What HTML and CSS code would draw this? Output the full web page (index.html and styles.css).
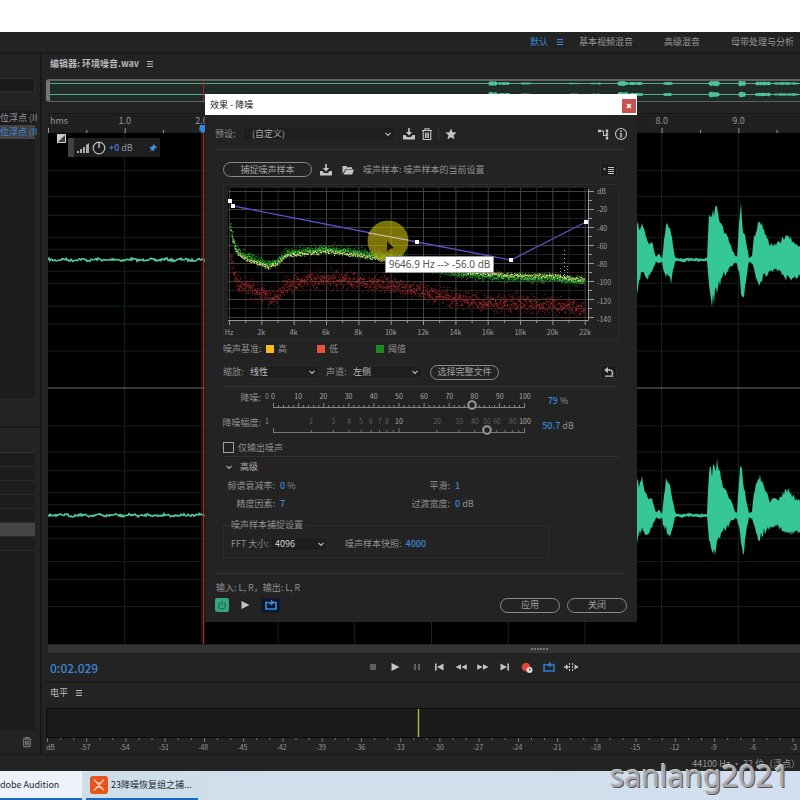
FILE: index.html
```html
<!DOCTYPE html>
<html lang="zh-CN">
<head>
<meta charset="utf-8">
<title>Adobe Audition</title>
<link rel="stylesheet" href="styles.css">
</head>
<body>
<svg class="defs" aria-hidden="true">
  <symbol id="i-menu" viewBox="0 0 8 8"><path d="M1 1.500h6M1 4h6M1 6.500h6" stroke="currentColor" fill="none"/></symbol>
  <symbol id="i-chev" viewBox="0 0 8 8"><path d="M1.500 2.800L4 5.300l2.500-2.500" stroke="currentColor" stroke-width="1.200" fill="none"/></symbol>
  <symbol id="i-save" viewBox="0 0 14 14"><path d="M6.200 1h1.600v4h2.400L7 8.600 3.800 5h2.400z M1 8h2.500l1.500 2h4l1.500-2H13v4.500H1z" fill="currentColor"/></symbol>
  <symbol id="i-trash" viewBox="0 0 14 14"><path d="M2 3.500h10M5 3.200V1.700h4v1.500M3.200 4v8.500h7.600V4M5.500 5.500v5.500M7 5.500v5.500M8.500 5.500v5.500" stroke="currentColor" stroke-width="1.100" fill="none"/></symbol>
  <symbol id="i-loop" viewBox="0 0 14 14"><path d="M4 4.500H2V11h10V4.500h-2" stroke="currentColor" stroke-width="1.600" fill="none"/><path d="M4.500 6.500V4H7V1.500L10.500 4.700 7 7.800V5.500z" fill="currentColor"/></symbol>
  <symbol id="i-play" viewBox="0 0 14 14"><path d="M3.500 3l8 4-8 4z" fill="currentColor"/></symbol>
</svg>

<div class="blank"></div>
<div class="app">
  <nav class="workspaces">
    <a href="#" class="active">默认<svg class="i8"><use href="#i-menu"/></svg></a>
    <a href="#">基本视频混音</a>
    <a href="#">高级混音</a>
    <a href="#">母带处理与分析</a>
  </nav>
  <div class="main">
    <aside class="side">
      <section class="files">
        <input class="search" type="text" aria-label="搜索">
        <ul class="file-list">
          <li>位浮点 (II</li>
          <li class="selected">位浮点 (II</li>
        </ul>
      </section>
      <section class="history">
        <ul class="rows"><li></li><li></li><li></li><li></li><li></li><li class="selected"></li><li></li></ul>
        <div class="side-tools"><button class="icon" aria-label="删除"><svg class="i12"><use href="#i-trash"/></svg></button></div>
      </section>
    </aside>

    <main class="editor">
      <header class="panel-title"><b>编辑器: 环境噪音.wav</b><svg class="i8"><use href="#i-menu"/></svg></header>
      <div class="overview"><svg viewBox="50 80 750 20" preserveAspectRatio="none" id="overview"></svg></div>
      <div class="time-ruler">
        <div class="time-labels"><span class="unit">hms</span><span>1.0</span><span>2.0</span><span>3.0</span><span>4.0</span><span>5.0</span><span>6.0</span><span>7.0</span><span>8.0</span><span>9.0</span></div>
        <svg class="ticks" viewBox="48 0 752 8" preserveAspectRatio="none" id="time-ticks"></svg>
      </div>
      <div class="wave">
        <svg class="wave-plot" viewBox="48 133 752 512" preserveAspectRatio="none" id="wave"></svg>
        <svg class="corner" viewBox="0 0 9 9"><path d="M0 0h9v9H0z" fill="#ccc"/><path d="M8 1v7H1z" fill="#444"/></svg>
        <div class="hud">
          <svg class="i14" viewBox="0 0 14 12"><path d="M1 11h2v-2H1zM4 11h2V7H4zM7 11h2V5H7zM10 11h3V1l-3 2z" fill="#aaa"/></svg>
          <svg class="i14" viewBox="0 0 14 14"><circle cx="7" cy="7" r="5.800" fill="none" stroke="#bbb" stroke-width="1.200"/><path d="M7 1v6" stroke="#ccc" stroke-width="1.300"/></svg>
          <span><em>+0</em> dB</span>
          <svg class="pin" viewBox="0 0 10 10"><path d="M5.500 1L9 4.500 8 5 6.800 5.500 5.500 8.500 3.800 6.800 1 9.200 3.200 6.200 1.500 4.500 4.500 3.200z" fill="#3f8fe0"/></svg>
        </div>
      </div>
      <div class="hscroll"><span></span></div>
      <div class="transport">
        <output class="clock">0:02.029</output>
        <div class="controls">
          <button class="icon dim" aria-label="停止"><svg class="i14" viewBox="0 0 14 14"><path d="M4 4h6v6H4z" fill="currentColor"/></svg></button>
          <button class="icon" aria-label="播放"><svg class="i14"><use href="#i-play"/></svg></button>
          <button class="icon dim" aria-label="暂停"><svg class="i14" viewBox="0 0 14 14"><path d="M4 4h2v6H4zM8 4h2v6H8z" fill="currentColor"/></svg></button>
          <button class="icon" aria-label="上一个"><svg class="i14" viewBox="0 0 14 14"><path d="M3 3.500h1.600v7H3zM11.500 3.500v7L5 7z" fill="currentColor"/></svg></button>
          <button class="icon" aria-label="快退"><svg class="i14" viewBox="0 0 14 14"><path d="M7 4.300v5.400L1.500 7zM12.800 4.300v5.400L7.300 7z" fill="currentColor"/></svg></button>
          <button class="icon" aria-label="快进"><svg class="i14" viewBox="0 0 14 14"><path d="M1.200 4.300v5.400L6.700 7zM7 4.300v5.400L12.500 7z" fill="currentColor"/></svg></button>
          <button class="icon" aria-label="下一个"><svg class="i14" viewBox="0 0 14 14"><path d="M9.400 3.500H11v7H9.400zM2.500 3.500v7L9 7z" fill="currentColor"/></svg></button>
          <button class="icon" aria-label="录制"><svg class="i14" viewBox="0 0 14 14"><circle cx="6" cy="7" r="4.300" fill="#e8423e"/><circle cx="9.500" cy="10" r="3" fill="#ddd"/><path d="M9.500 8.300V10H11" stroke="#333" stroke-width=".8" fill="none"/></svg></button>
          <button class="icon blue" aria-label="循环播放"><svg class="i14"><use href="#i-loop"/></svg></button>
          <button class="icon" aria-label="跳过所选项目"><svg class="i14" viewBox="0 0 14 14"><path d="M0 7h3M11 7h3" stroke="currentColor" stroke-width="1.300"/><path d="M5.500 3v8M8.500 3v8" stroke="currentColor" stroke-dasharray="2 1"/><path d="M2 4.300L5 7 2 9.700zM10.500 4.300L14 7l-3.500 2.700z" fill="currentColor"/></svg></button>
        </div>
      </div>
      <section class="levels">
        <header class="panel-title">电平<svg class="i8"><use href="#i-menu"/></svg></header>
        <div class="meter"><svg viewBox="46 0 754 29" preserveAspectRatio="none"><path d="M418 0v29" stroke="#b0b040" stroke-width="1.500"/></svg></div>
        <svg class="ticks" viewBox="46 0 754 4" preserveAspectRatio="none" id="level-ticks"></svg>
        <div class="level-labels"><span>dB</span><span>-57</span><span>-54</span><span>-51</span><span>-48</span><span>-45</span><span>-42</span><span>-39</span><span>-36</span><span>-33</span><span>-30</span><span>-27</span><span>-24</span><span>-21</span><span>-18</span><span>-15</span><span>-12</span><span>-9</span><span>-6</span><span>-3</span></div>
      </section>
    </main>
  </div>
  <footer class="status">44100 Hz • 32 位（浮点）</footer>
</div>

<div class="taskbar">
  <button class="task first">dobe Audition</button>
  <button class="task second"><svg class="i18" viewBox="0 0 18 18"><rect width="18" height="18" rx="3" fill="#e8531c"/><path d="M4 3.500q5 7 10 0M4 14.500q5-7 10 0M4.500 4l9 10M13.500 4l-9 10" stroke="#ffd9bd" stroke-width="1.200" fill="none"/></svg>23降噪恢复组之捕...</button>
</div>
<div class="watermark">sanlang2021</div>

<div class="dialog" role="dialog" aria-labelledby="dlg-title">
  <header class="dlg-head"><span id="dlg-title">效果 - 降噪</span><button aria-label="关闭窗口" class="x"><svg viewBox="0 0 8 8"><path d="M2 2l4 4M6 2L2 6" stroke="#fff" stroke-width="1.500"/></svg></button></header>
  <div class="preset">
    <label for="preset">预设:</label>
    <span class="select wide"><select id="preset"><option>(自定义)</option></select><svg class="i8"><use href="#i-chev"/></svg></span>
    <button class="icon" aria-label="保存预设"><svg class="i14"><use href="#i-save"/></svg></button>
    <button class="icon" aria-label="删除预设"><svg class="i14"><use href="#i-trash"/></svg></button>
    <i class="sep"></i>
    <button class="icon" aria-label="收藏"><svg class="i12" viewBox="0 0 12 12"><path d="M6 .5l1.600 3.700 4 .4-3 2.700.9 4L6 9.200l-3.500 2.100.9-4-3-2.700 4-.4z" fill="currentColor"/></svg></button>
    <span class="grow"></span>
    <button class="icon" aria-label="声道路由"><svg class="i12" viewBox="0 0 12 12"><path d="M1 3h5.500v4.500H10M10 2.500v8" stroke="currentColor" stroke-width="1.100" fill="none"/><path d="M1 1.800h3v2.400H1zM8.800 1.500h2.400v2.400H8.800zM8.800 5.300h2.400v2.400H8.800zM8.800 9h2.400v2.400H8.800z" fill="currentColor"/></svg></button>
    <button class="icon" aria-label="信息"><svg class="i14" viewBox="0 0 14 14"><circle cx="7" cy="7" r="5.500" stroke="currentColor" stroke-width="1.100" fill="none"/><path d="M6.200 3.400h1.600V5H6.200zM5.700 6h2.100v3.700h.6v.8H5.600v-.8h.7V6.800h-.6z" fill="currentColor"/></svg></button>
  </div>
  <div class="content">
    <div class="capture">
      <button class="pill">捕捉噪声样本</button>
      <button class="icon" aria-label="保存噪声样本"><svg class="i14"><use href="#i-save"/></svg></button>
      <button class="icon" aria-label="打开噪声样本"><svg class="i14" viewBox="0 0 14 14"><path d="M1.500 11V3h3.800l1 1.300H11V6H4.500zM5 6.600h8L11.200 11.500H2.500z" fill="currentColor"/></svg></button>
      <span>噪声样本: 噪声样本的当前设置</span>
      <span class="grow"></span>
      <button class="square" aria-label="菜单"><svg class="i12" viewBox="0 0 12 10"><path d="M0 3.500h3L1.500 5.500z" fill="currentColor"/><path d="M5 2.500h6M5 4.500h6M5 6.500h6M5 8.500h6" stroke="currentColor"/></svg></button>
    </div>

    <div class="chart">
      <div class="plot">
        <svg viewBox="228 188 367 137" preserveAspectRatio="none" id="spectrum"></svg>
        <div class="tip">9646.9 Hz --&gt; -56.0 dB</div>
      </div>
      <div class="db"><span>dB</span><span>-20</span><span>-40</span><span>-60</span><span>-80</span><span>-100</span><span>-120</span><span>-140</span></div>
      <div class="hz"><span>Hz</span><span>2k</span><span>4k</span><span>6k</span><span>8k</span><span>10k</span><span>12k</span><span>14k</span><span>16k</span><span>18k</span><span>20k</span><span>22k</span></div>
    </div>

    <div class="key"><span class="key-name">噪声基准:</span><span class="high">高</span><span class="low">低</span><span class="thr">阈值</span></div>

    <div class="zoom">
      <label for="scale">缩放:</label>
      <span class="select mid"><select id="scale"><option>线性</option></select><svg class="i8"><use href="#i-chev"/></svg></span>
      <label for="chan">声道:</label>
      <span class="select mid"><select id="chan"><option>左侧</option></select><svg class="i8"><use href="#i-chev"/></svg></span>
      <button class="pill">选择完整文件</button>
      <span class="grow"></span>
      <button class="square" aria-label="重置"><svg class="i12" viewBox="0 0 12 12"><path d="M3 4h3.500a3 3 0 0 1 2 5.300" stroke="currentColor" stroke-width="1.500" fill="none"/><path d="M5 1v6L1 4zM2 9.500h8.500v1.300H2z" fill="currentColor"/></svg></button>
    </div>

    <div class="sliders">
      <div class="slider">
        <label for="nr">降噪:</label><span class="min">0</span>
        <div class="scale">
          <div class="nums"><span>0</span><span>10</span><span>20</span><span>30</span><span>40</span><span>50</span><span>60</span><span>70</span><span>80</span><span>90</span><span>100</span></div>
          <div class="track"><svg viewBox="0 0 252 10" preserveAspectRatio="none" id="lin-ticks"></svg><input type="range" id="nr" min="0" max="100" value="79"></div>
        </div>
        <output><em>79</em> %</output>
      </div>
      <div class="slider">
        <label for="nrdb">降噪幅度:</label><span class="min">1</span>
        <div class="scale">
          <svg class="log-nums" id="log-nums"></svg>
          <div class="track"><svg viewBox="0 0 252 10" preserveAspectRatio="none" id="log-ticks"></svg><input type="range" id="nrdb" min="0" max="1000" value="850"></div>
        </div>
        <output><em>50.7</em> dB</output>
      </div>
      <label class="check"><input type="checkbox">仅输出噪声</label>
    </div>

    <div class="advanced"><svg class="i8"><use href="#i-chev"/></svg>高级</div>
    <div class="pairs">
      <span>频谱衰减率:</span><span><em>0</em> %</span><span>平滑:</span><span><em>1</em></span>
      <span>精度因素:</span><span><em>7</em></span><span>过渡宽度:</span><span><em>0</em> dB</span>
    </div>
    <fieldset>
      <legend>噪声样本捕捉设置</legend>
      <div class="fft">
        <label for="fft">FFT 大小:</label>
        <span class="select small"><select id="fft"><option>4096</option></select><svg class="i8"><use href="#i-chev"/></svg></span>
        <span>噪声样本快照:</span><em>4000</em>
      </div>
    </fieldset>
  </div>
  <footer class="dlg-foot">
    <div class="io">输入: L, R，输出: L, R</div>
    <div class="actions">
      <button class="power" aria-label="电源"><svg class="i12" viewBox="0 0 12 12"><path d="M6 2V6.500M3.800 3.800a3.500 3.500 0 1 0 4.400 0" stroke="#1d6b50" stroke-width="1.100" fill="none"/></svg></button>
      <button class="icon" aria-label="预览播放"><svg class="i14"><use href="#i-play"/></svg></button>
      <button class="loop" aria-label="循环"><svg class="i14"><use href="#i-loop"/></svg></button>
      <span class="grow"></span>
      <button class="pill end">应用</button>
      <button class="pill end">关闭</button>
    </div>
  </footer>
</div>
<script src="script.js"></script>
</body>
</html>
```
FILE: styles.css
```css
* { box-sizing: border-box; }
html { height: 100%; }
body {
  margin: 0;
  min-height: 100%;
  display: flex;
  flex-direction: column;
  position: relative;
  overflow: hidden;
  background: #fff;
  color: #979797;
  font: 9px/12px "Noto Sans CJK SC", "Noto Sans", sans-serif;
}
button, input, select { font: inherit; color: inherit; margin: 0; padding: 0; }
button { border: 0; background: none; display: flex; align-items: center; justify-content: center; white-space: nowrap; }
svg { display: block; flex: none; }
em { font-style: normal; font-weight: 500; color: #3b86dc; }
a { color: inherit; text-decoration: none; }
ul { list-style: none; margin: 0; padding: 0; }
.defs { width: 0; height: 0; position: absolute; }
.i8 { width: 8px; height: 8px; }
.i12 { width: 12px; height: 12px; }
.i14 { width: 14px; height: 14px; }
.i18 { width: 18px; height: 18px; }
.grow { flex: 1; }
.icon { color: #c4c4c4; }
.icon.dim { color: #606060; }
.icon.blue { color: #2f7ad0; }

.blank { height: 32px; }
.app { flex: 1; display: flex; flex-direction: column; background: #232323; }
.workspaces {
  height: 20px;
  display: flex;
  align-items: center;
  justify-content: flex-end;
  gap: 31px;
  padding-right: 6px;
  white-space: nowrap;
}
.workspaces .active { display: flex; align-items: center; gap: 8px; color: #3b86dc; margin-right: -16px; }
.main { flex: 1; display: flex; border-top: 2px solid #1a1a1a; border-bottom: 1px solid #181818; }

.side { width: 42px; display: flex; flex-direction: column; border-right: 2px solid #181818; }
.files { height: 374px; padding-top: 24px; border-bottom: 2px solid #181818; }
.search { width: 35px; height: 14px; display: block; border: 1px solid #2d2d2d; border-left: 0; background: #191919; }
.file-list { width: 35px; height: 287px; margin-top: 19px; background: #1c1c1c; white-space: nowrap; }
.file-list li { height: 14px; line-height: 14px; }
.file-list .selected { background: #424242; color: #3b86dc; }
.history { flex: 1; display: flex; flex-direction: column; padding-top: 24px; }
.rows { flex: 1; width: 35px; background: #1c1c1c; border-top: 1px solid #303030; }
.rows li { height: 14px; border-bottom: 1px solid #292929; }
.rows .selected { background: #454545; }
.side-tools { height: 24px; display: flex; align-items: center; justify-content: center; padding-left: 14px; }
.side-tools .icon { color: #8a8a8a; }

.editor { flex: 1; min-width: 0; display: flex; flex-direction: column; padding-left: 4px; }
.panel-title { height: 20px; display: flex; align-items: center; gap: 7px; padding-left: 4px; color: #b8b8b8; }
.overview { height: 23px; margin-top: 5px; border: 2px solid #606060; border-right: 0; border-left: 4px solid #777; border-radius: 3px 0 0 3px; border-bottom-width: 1px; background: #202a27; }
.overview svg { width: 100%; height: 20px; }
.time-ruler { height: 20px; margin: 11px 0 0 2px; border-top: 1px solid #181818; background: #202020; display: flex; flex-direction: column; justify-content: space-between; }
.time-labels { display: grid; grid-template-columns: 5fr repeat(9, 10fr) 3fr; text-align: center; line-height: 14px; margin-bottom: -3px; }
.time-labels .unit { text-align: left; padding-left: 2px; }
.time-labels span { min-width: 0; }
.ticks { width: 100%; height: 8px; }
.wave { position: relative; flex: 1; min-height: 300px; margin-left: 2px; background: #000; }
.wave-plot { position: absolute; inset: 0; width: 100%; height: 100%; }
.corner { position: absolute; left: 9px; top: 1px; width: 9px; height: 9px; }
.hud {
  position: absolute;
  left: 20px;
  top: 5px;
  width: 92px;
  height: 19px;
  display: flex;
  align-items: center;
  gap: 2px;
  padding-left: 2px;
  border-left: 6px solid #424242;
  background: #1e1e1e;
}
.hud span { flex: 1; padding-left: 1px; white-space: nowrap; }
.pin { width: 10px; height: 10px; margin-right: 2px; }
.hscroll { height: 8px; margin: 1px 0 0 2px; background: #343434; display: flex; align-items: center; justify-content: center; }
.hscroll span { width: 18px; height: 2px; margin-left: 232px; background: repeating-linear-gradient(90deg, #777 0 2px, #343434 2px 3px); }
.transport { height: 30px; display: grid; grid-template-columns: 314px 1fr; align-items: center; padding-left: 4px; border-bottom: 2px solid #181818; }
.clock { font-size: 12px; line-height: 16px; color: #3d84d6; font-weight: 500; padding-top: 2px; }
.controls { display: flex; gap: 8px; margin-left: 2px; }
.levels { height: 71px; display: flex; flex-direction: column; }
.levels .panel-title { height: 20px; flex: none; }
.meter { height: 30px; margin-top: 5px; flex: none; border: 1px solid #0c0c0c; border-right: 0; background: #1b1b1b; }
.meter svg { width: 100%; height: 28px; }
.levels .ticks { height: 4px; }
.level-labels { display: grid; grid-template-columns: 5fr repeat(18, 10fr) 7fr; text-align: center; font-size: 7px; line-height: 10px; }
.level-labels span { min-width: 0; }
.level-labels span:first-child { text-align: left; }
.level-labels span:last-child { text-align: right; padding-right: 3px; }
.status { height: 16px; line-height: 18px; text-align: right; white-space: nowrap; }

.taskbar { height: 29px; display: flex; gap: 4px; background: linear-gradient(90deg, #cddfe9, #d3dfef); color: #1c2733; }
.task { height: 29px; border-bottom: 2px solid #1a6bc0; }
.task.first { width: 82px; justify-content: flex-start; background: #eef2fa; }
.task.second { width: 112px; justify-content: flex-start; gap: 3px; padding-left: 4px; }
.watermark {
  position: absolute;
  right: 10px;
  bottom: 4px;
  color: #a8a8ac;
  font: 30px/40px "Noto Sans", "Open Sans", sans-serif;
  text-shadow: 1px 1px 0 #555, -1px -1px 0 #c8c8cc;
}

.dialog { position: absolute; left: 205px; top: 94px; width: 432px; background: #232323; color: #8f8f8f; }
.dlg-head { height: 21px; display: flex; align-items: center; justify-content: space-between; padding-left: 5px; background: #fff; color: #222; }
.x { width: 14px; height: 14px; margin-right: 1px; margin-top: 2px; background: #c75050; }
.x svg { width: 8px; height: 8px; }
.preset { height: 35px; display: flex; align-items: center; margin: 0 10px; padding-top: 4px; border-bottom: 1px solid #323232; }
.preset label { width: 28px; }
.preset .icon { margin-left: 4px; }
.preset .wide + .icon { margin-left: 7px; }
.sep { width: 1px; height: 12px; margin-left: 4px; background: #383838; }
.preset .sep + .icon { margin-left: 6px; }
.preset .icon:last-child { margin: 0 -1px 0 5px; }
.select { display: grid; align-items: center; }
.select > * { grid-area: 1 / 1; }
.select select { width: 100%; height: 14px; appearance: none; border: 1px solid #272727; background: #1e1e1e; color: #bcbcbc; border-radius: 1px; }
.select svg { justify-self: end; margin-right: 3px; pointer-events: none; color: #bbb; }
.wide { width: 152px; }
.wide select { padding-left: 8px; color: #a8a8a8; }
.mid { width: 70px; }
.small { width: 58px; }
.small select { padding-left: 4px; }

.content { padding: 0 18px; }
.capture { height: 34px; display: flex; align-items: center; gap: 8px; padding-top: 5px; white-space: nowrap; }
.pill { height: 15px; border: 1px solid #8a8a8a; border-radius: 8px; color: #a0a0a0; }
.capture .pill { width: 89px; margin-right: -1px; }
.square { width: 17px; height: 14px; border: 1px solid #2a2a2a; background: #1c1c1c; color: #c0c0c0; margin-right: 2px; }

.chart {
  height: 156px;
  display: grid;
  grid-template: 141px 15px / 371px 1fr;
  border: 1px solid #2b2b2b;
  background: #222;
  font-size: 7px;
  line-height: 12px;
  color: #a0a0a0;
}
.plot { position: relative; padding: 3px 0 0 4px; }
.plot svg { width: 100%; height: 137px; }
.db { display: flex; flex-direction: column; justify-content: space-between; height: 140px; margin-left: 2px; }
.hz { display: flex; justify-content: space-between; width: 366px; }
.hz span { width: 10px; display: flex; justify-content: center; }
.tip {
  position: absolute;
  left: 161px;
  top: 71px;
  width: 109px;
  height: 17px;
  border: 1px solid #999;
  background: #fff;
  color: #555;
  font: 10px/15px "Noto Sans", sans-serif;
  text-align: center;
  white-space: nowrap;
}
.key { height: 18px; display: flex; align-items: center; }
.key-name { width: 43px; }
.key .high, .key .low, .key .thr { display: flex; align-items: center; gap: 4px; }
.key .high::before, .key .low::before, .key .thr::before { content: ""; width: 8px; height: 8px; }
.key .high { width: 51px; }
.key .low { width: 59px; }
.high::before { background: #f5b921; }
.low::before { background: #e8533c; }
.thr::before { background: #1b8a1f; }
.zoom { height: 29px; display: flex; align-items: center; border-bottom: 1px solid #323232; white-space: nowrap; }
.zoom label { width: 26px; }
.zoom .select select { padding-left: 0; }
.zoom .mid { margin-right: 7px; }
.zoom .pill { width: 69px; margin-left: 1px; }

.sliders { padding-top: 2px; border-bottom: 1px solid #323232; }
.slider { height: 25px; display: flex; padding-top: 1px; white-space: nowrap; }
.slider label { width: 38px; display: flex; justify-content: flex-end; padding-top: 2px; }
.min { width: 8px; text-align: right; font-size: 7px; }
.scale { width: 260px; font-size: 7px; }
.nums { display: flex; justify-content: space-between; color: #a8a8a8; }
.nums span { width: 8px; display: flex; justify-content: center; }
.log-nums { width: 252px; height: 12px; margin-left: 4px; overflow: visible; fill: #606060; text-anchor: middle; }
.log-nums .major { fill: #b0b0b0; }
.track { display: grid; align-items: center; margin-top: -2px; }
.track > * { grid-area: 1 / 1; }
.track svg { width: 252px; height: 10px; margin-left: 4px; }
.track input { width: 260px; height: 10px; appearance: none; background: none; }
.track input::-webkit-slider-thumb { appearance: none; width: 8px; height: 8px; border: 1px solid #c0c0c0; border-radius: 50%; background: #232323; box-shadow: 0 0 0 1px #777; }
.slider output { width: 58px; padding-top: 5px; text-align: center; }
.check { height: 17px; display: flex; align-items: center; gap: 4px; }
.check input { appearance: none; width: 11px; height: 11px; border: 1px solid #a0a0a0; }
.advanced { height: 20px; display: flex; align-items: center; gap: 7px; padding-left: 2px; color: #b0b0b0; }
.pairs { display: grid; grid-template-columns: 52px 112px 53px 1fr; line-height: 18px; column-gap: 5px; }
.pairs > :nth-child(odd) { text-align: right; white-space: nowrap; }
fieldset { margin: 6px 70px 0 0; padding: 0; border: 1px solid #2e2e2e; min-width: 0; }
legend { margin-left: 7px; padding: 0 2px 0 0; }
.fft { height: 26px; display: flex; align-items: center; gap: 4px; padding-left: 7px; white-space: nowrap; }
.fft label { width: 35px; }
.fft .small { margin-right: 13px; }
.fft .small select { color: #d0d0d0; }
.dlg-foot { margin: 15px 10px 0; padding: 8px 0 9px; border-top: 1px solid #323232; }
.io { padding-left: 1px; }
.actions { height: 16px; margin-top: 3px; display: flex; align-items: center; }
.power { width: 14px; height: 14px; background: #35a37d; border-radius: 2px; }
.actions .icon { margin: 0 9px; }
.loop { width: 19px; height: 15px; background: #0e1726; border: 1px solid #151c28; color: #3b8ee8; }
.end { width: 60px; margin-left: 7px; }
```
FILE: script.js
```js
const NS = 'http://www.w3.org/2000/svg';
const byId = id => document.getElementById(id);

function add(svg, tag, attrs) {
  const el = document.createElementNS(NS, tag);
  for (const k in attrs) el.setAttribute(k, attrs[k]);
  svg.appendChild(el);
  return el;
}
const stroke = (svg, d, color, width = 1) =>
  add(svg, 'path', { d, stroke: color, 'stroke-width': width, fill: 'none' });

let seed = 7;
function rnd() {
  seed = (seed * 16807) % 2147483647;
  return seed / 2147483647;
}
function lerp(points, x) {
  let i = 1;
  while (i < points.length - 1 && points[i][0] < x) i++;
  const a = points[i - 1], b = points[i];
  const t = (x - a[0]) / (b[0] - a[0]);
  return a.map((v, k) => v + (b[k] - v) * t);
}

/* Waveform envelope: time position, upper edge, lower edge */
const envelope = [
  [637, 223, 291], [639, 228, 280], [642, 220, 275], [647, 242, 280], [652, 243, 273], [656, 257, 262],
  [659, 254, 264], [662, 259, 262], [663, 250, 270], [666, 224, 275], [671, 233, 282], [675, 257, 262],
  [677, 259, 261], [707, 259, 261], [709, 213, 286], [712, 217, 304], [717, 206, 293], [722, 227, 278],
  [730, 243, 268], [735, 256, 263], [737, 257, 264], [739, 225, 275], [741, 207, 290], [743, 227, 303],
  [747, 247, 273], [749, 258, 262], [752, 256, 264], [754, 237, 270], [759, 219, 285], [763, 227, 278],
  [770, 245, 273], [778, 243, 270], [787, 234, 280], [793, 241, 278], [800, 245, 277]
];

function drawWave() {
  const svg = byId('wave');
  let v = '';
  for (let i = 1; i < 10; i++) v += `M${(48 + 76.7 * i).toFixed(1)} 133V645`;
  stroke(svg, v, '#10291a');
  let h = '';
  for (const off of [0, 256])
    for (const y of [170, 196, 215, 237, 249, 271, 283, 306, 324, 351]) h += `M48 ${y + off + .5}H800`;
  stroke(svg, h, '#15211a');
  stroke(svg, 'M48 388.5H800', '#5c7a5e');
  for (const off of [0, 256]) {
    let line = `M48 ${260 + off}`;
    for (let x = 49; x < 800; x++) line += `L${x} ${(260 + off + Math.sin(x / 2.7) * .6 + (rnd() - .5) * 2.4).toFixed(1)}`;
    stroke(svg, line, '#55c8a0', 1.6);
    let top = '', bottom = '';
    for (let x = 637; x <= 800; x++) {
      const [, t, b] = lerp(envelope, x);
      const j = (b - t) * .16;
      top += `${top ? 'L' : 'M'}${x} ${(t + off + (rnd() - .4) * j).toFixed(1)}`;
      bottom = `L${x} ${(b + off + (rnd() - .6) * j).toFixed(1)}` + bottom;
    }
    add(svg, 'path', { d: top + bottom + 'Z', fill: '#35c796' });
  }
  stroke(svg, 'M203.5 133V645', '#b32a2a', 1.5);
}

function drawOverview() {
  const svg = byId('overview');
  const bursts = [[488, 10, 2.4], [497, 14, 1.4], [520, 12, 1], [568, 12, .8], [590, 12, .8], [617, 12, 2.4],
    [628, 16, 1.6], [663, 10, 1.5], [708, 12, 2.8], [738, 8, 2.6], [754, 18, 1.8], [772, 28, 1.2]];
  for (const y of [82.5, 93.5]) {
    stroke(svg, `M50 ${y}H800`, '#5aa58c', 1.2);
    for (const [x, w, r] of bursts) {
      let up = '', down = '';
      for (let k = 0; k <= w; k++) {
        const a = r * Math.min(1, 2.4 * Math.sin(Math.PI * k / w)) * (.65 + .5 * rnd());
        up += `${up ? 'L' : 'M'}${x + k} ${(y - a).toFixed(1)}`;
        down = `L${x + k} ${(y + a).toFixed(1)}` + down;
      }
      add(svg, 'path', { d: up + down + 'Z', fill: '#4cc39c' });
    }
  }
  stroke(svg, 'M203.5 80V100', '#a02828');
}

function drawTicks() {
  let d = '';
  for (let i = 0; i < 20; i++) d += `M${(48.5 + 38.35 * i).toFixed(1)} 8V${i % 2 ? 5 : 3}`;
  const ruler = byId('time-ticks');
  stroke(ruler, d, '#999');
  add(ruler, 'path', { d: 'M200 0h6v6l-3 2-4-3z', fill: '#2f86dc' });
  d = '';
  for (let i = 0; i < 58; i++) d += `M${(47.5 + 13.08 * i).toFixed(1)} 0V${i % 3 ? 2 : 4}`;
  stroke(byId('level-ticks'), d, '#777');

  d = 'M0 7.5H252';
  for (let i = 0; i <= 50; i++) d += `M${(i * 5.02 + .5).toFixed(1)} 7V${i % 5 ? 5 : 3}`;
  stroke(byId('lin-ticks'), d, '#858585');
  const nums = byId('log-nums');
  d = 'M0 7.5H252';
  for (let i = 1; i <= 19; i++) {
    const value = i < 10 ? i : (i - 9) * 10;
    const p = Math.log10(value) / 2;
    d += `M${(p * 251 + .5).toFixed(1)} 7V${value === 1 || value === 10 || value === 100 ? 3 : 5}`;
    if (![1, 9, 70, 90].includes(value)) {
      const text = add(nums, 'text', { x: `${(p * 100).toFixed(1)}%`, y: 9 });
      if (value === 10 || value === 100) text.setAttribute('class', 'major');
      text.textContent = value;
    }
  }
  stroke(byId('log-ticks'), d, '#777');
}

/* Noise floor spectrum: x, level */
const floor = [[230, 228], [232, 238], [235, 249], [242, 256], [255, 261], [267, 265], [277, 262], [285, 254],
  [305, 252], [325, 250], [345, 252], [372, 256], [400, 259], [440, 269], [463, 273], [503, 276], [537, 277],
  [553, 277], [570, 279], [584, 281]];
const low = [[230, 262], [233, 272], [237, 283], [265, 296], [275, 297], [285, 286], [305, 281], [331, 279],
  [355, 282], [388, 285], [418, 291], [447, 298], [487, 303], [520, 304], [553, 306], [584, 309]];

function dots(svg, points, color, shift, spread, count) {
  let d = '';
  for (let x = 230; x < 584; x += 1)
    for (let k = 0; k < count; k++) {
      const y = lerp(points, x)[1] + shift(x) + (rnd() + rnd() + rnd() - 1.5) * spread;
      d += `M${(x + rnd()).toFixed(1)} ${y.toFixed(1)}h1`;
    }
  stroke(svg, d, color);
}

function drawSpectrum() {
  const svg = byId('spectrum');
  add(svg, 'path', { d: 'M228 188H588V320H228z', fill: '#000' });
  let minor = '', major = '', ticks = 'M228 320.5H588.500V189';
  for (let i = 0; i <= 22; i++) {
    const x = (229.5 + 16.17 * i).toFixed(1);
    if (i % 2) minor += `M${x} 188V320`; else major += `M${x} 188V320`;
    ticks += `M${x} 320V${i % 2 ? 323 : 325}`;
  }
  for (let i = 0; i <= 14; i++) {
    const y = (191.5 + 9 * i).toFixed(1);
    if (i % 2) minor += `M228 ${y}H588`; else major += `M228 ${y}H588`;
    ticks += `M588 ${y}H${i % 2 ? 592 : 594}`;
  }
  stroke(svg, minor, '#222');
  stroke(svg, major, '#424242');
  stroke(svg, ticks, '#999');
  dots(svg, low, '#8c2020', () => 0, 9, 5);
  dots(svg, low, '#c23a36', () => 0, 7, 1);
  dots(svg, floor, '#1f9a2a', x => x < 400 ? -1 : 1, 5, 4);
  dots(svg, floor, '#42d23e', x => x < 400 ? 0 : 1, 3, 2);
  dots(svg, floor, '#f0e88a', x => x < 400 ? 2 : -1, 2, 2);
  stroke(svg, 'M564.5 250V276', '#b8c878', 1).setAttribute('stroke-dasharray', '1 3');
  stroke(svg, 'M560.5 268V276M567.5 266V276', '#8a9a50', 1).setAttribute('stroke-dasharray', '1 2');
  stroke(svg, 'M230 202L233 206L417 242L511 260L586 222', '#5454c8', 1.3);
  add(svg, 'circle', { cx: 388, cy: 241, r: 20.5, fill: '#b5a80c', 'fill-opacity': .68 });
  stroke(svg, 'M368 233L408 240', '#c8c0a0');
  for (const [x, y] of [[230, 201], [233, 206], [417, 242], [511, 260], [586, 222]])
    add(svg, 'rect', { x: x - 2, y: y - 2, width: 4, height: 4, fill: '#fff' });
  add(svg, 'path', { d: 'M387 241v11l3-3 4-1z', fill: '#111' });
}

drawWave();
drawOverview();
drawTicks();
drawSpectrum();
```
